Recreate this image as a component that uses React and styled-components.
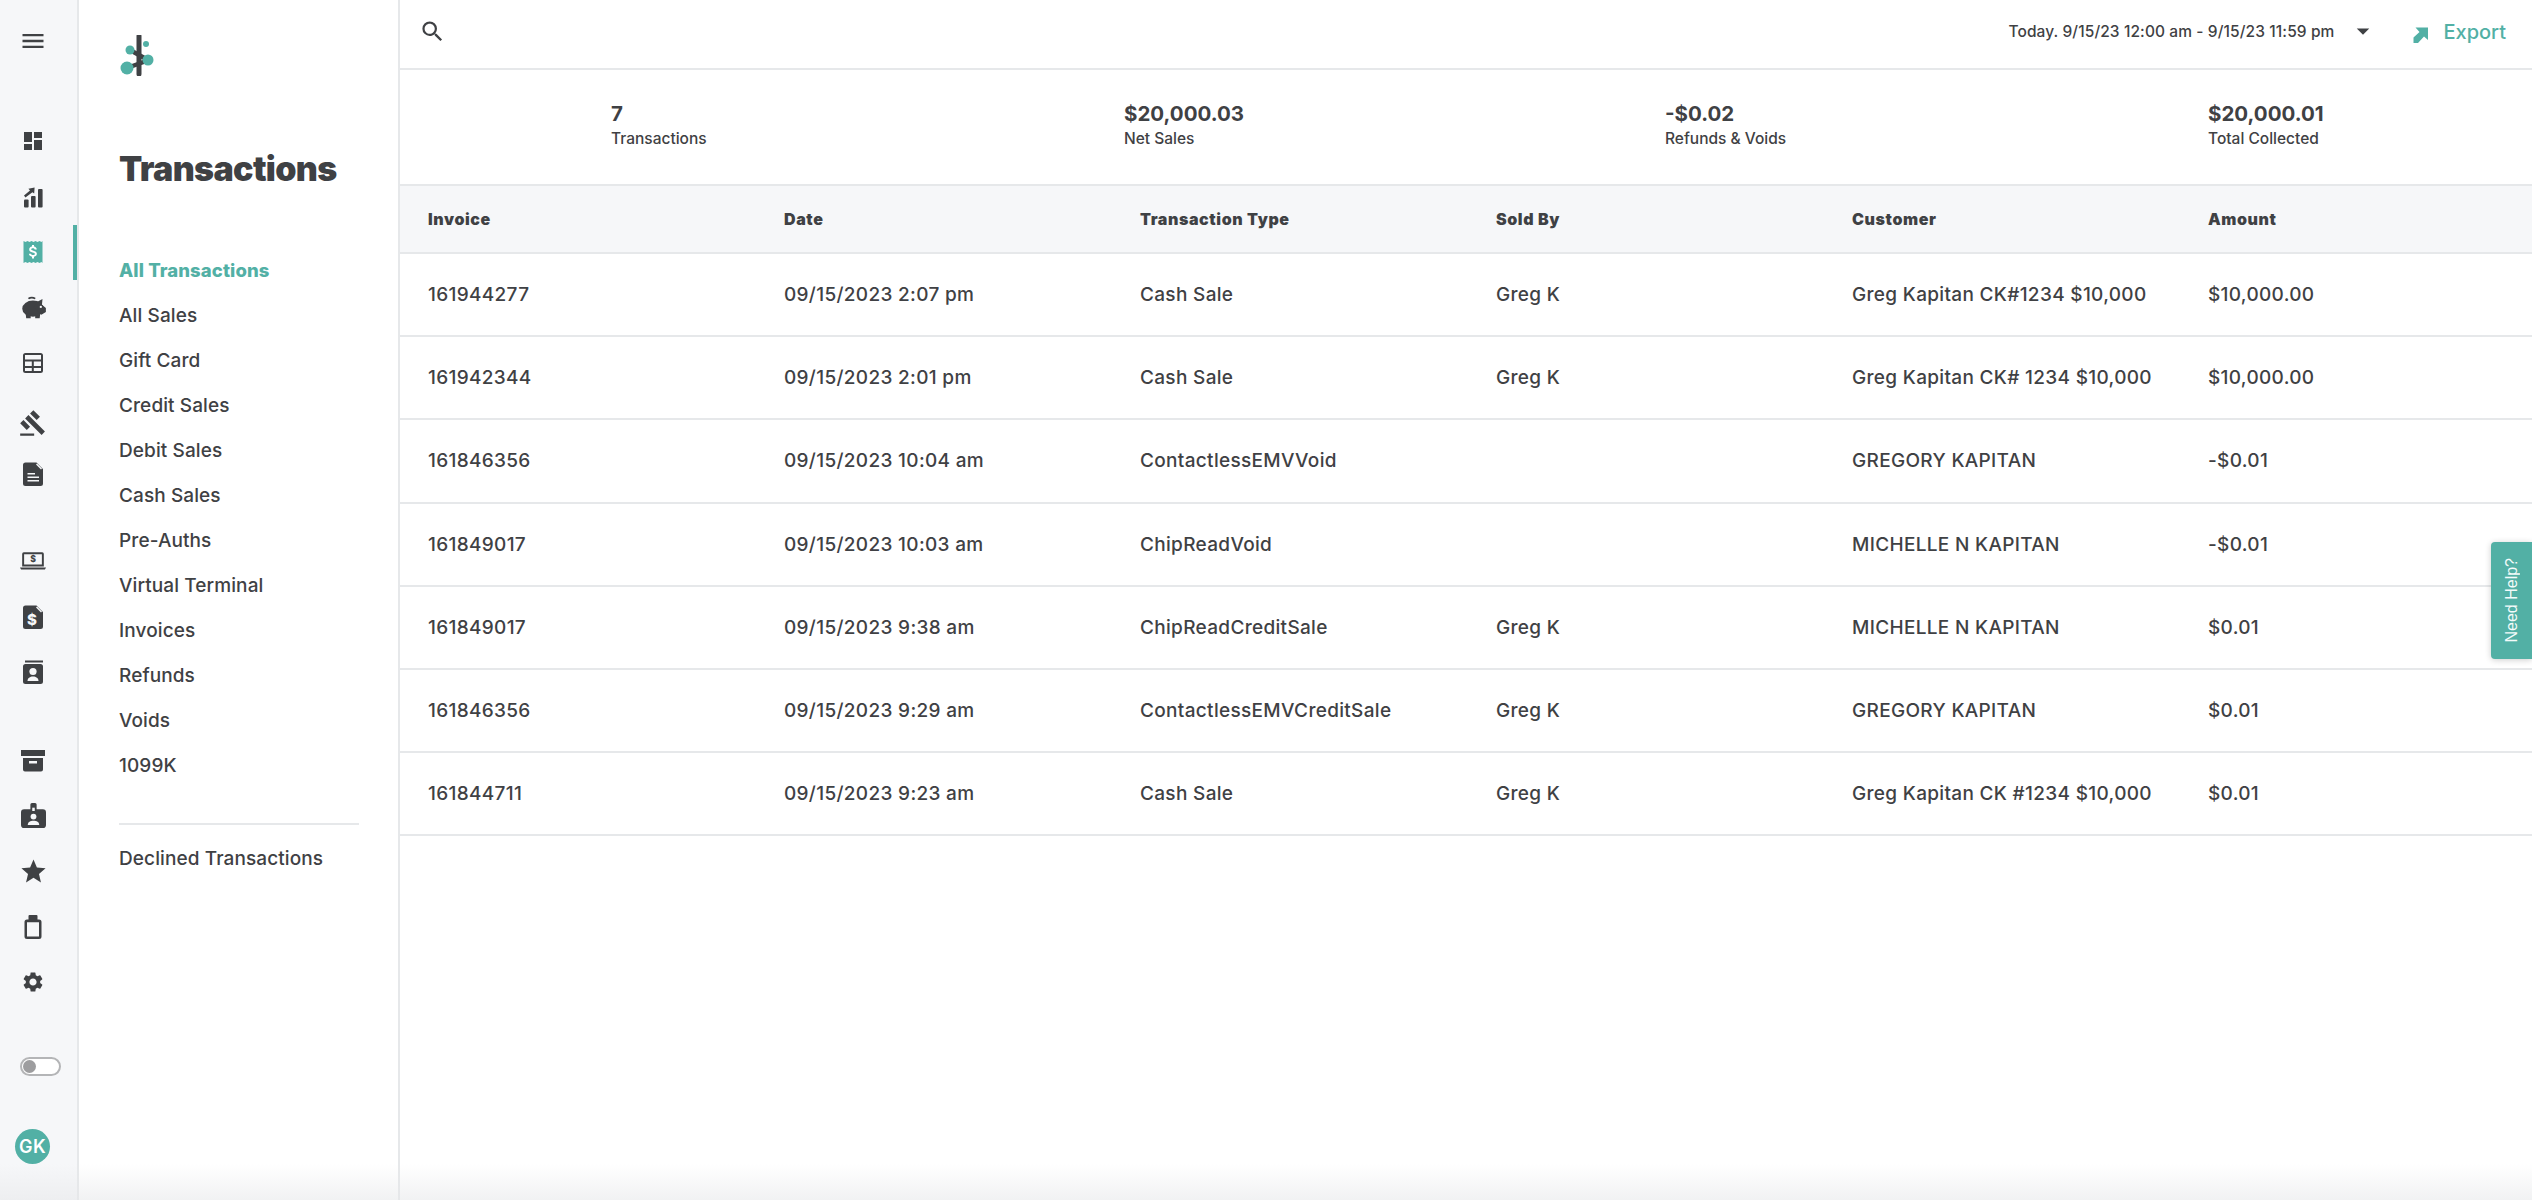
import React from "react";
import styled, { createGlobalStyle } from "styled-components";
import { MdMenu, MdDashboard, MdGavel, MdStar, MdSettings, MdSearch, MdArrowDropDown } from "react-icons/md";

const TEAL = "#52b0a5";
const INK = "#3f4144";
const LINE = "#e6e8ea";

const Global = createGlobalStyle`
  html, body { margin: 0; padding: 0; background: #fff; }
  body { font-family: Inter, "Liberation Sans", sans-serif; color: ${INK}; }
  * { box-sizing: border-box; }
`;

const Page = styled.div`
  position: relative;
  display: flex;
  width: 2532px;
  height: 1200px;
  overflow: hidden;
`;
const BottomFade = styled.div`
  position: absolute;
  left: 0; right: 0; bottom: 0;
  height: 36px;
  background: linear-gradient(to bottom, rgba(230,231,233,0), rgba(230,231,233,.55));
  pointer-events: none;
`;

const Rail = styled.nav`
  width: 79px;
  flex: none;
  padding-top: 13px;
  background: #f6f7f9;
  border-right: 2px solid ${LINE};
  display: flex;
  flex-direction: column;
`;
const RailGroup = styled.div`
  display: flex;
  flex-direction: column;
  margin-top: ${p => p.$gap}px;
`;
const RailSlot = styled.div`
  height: 55.5px;
  display: flex;
  align-items: center;
  justify-content: center;
  padding-right: 7px;
  padding-top: ${p => p.$drop || 0}px;
  border-right: 4px solid ${p => (p.$active ? TEAL : "transparent")};
  color: ${p => (p.$active ? TEAL : INK)};
  font-size: ${p => p.$size || 24}px;
`;
const Toggle = styled.div`
  margin: 47px 0 0 20px;
  width: 41px;
  height: 19px;
  border: 2px solid #b4b5b7;
  border-radius: 10px;
  background: #fff;
  padding: 1px;
  &::before {
    content: "";
    display: block;
    width: 13px;
    height: 13px;
    border-radius: 50%;
    background: #9d9d9f;
  }
`;
const Avatar = styled.div`
  margin: 53px 0 0 15px;
  width: 35px;
  height: 35px;
  border-radius: 50%;
  background: ${TEAL};
  color: #fff;
  font-size: 18px;
  font-weight: 600;
  letter-spacing: .5px;
  display: flex;
  align-items: center;
  justify-content: center;
`;

const Side = styled.aside`
  width: 321px;
  flex: none;
  padding: 35px 40px 0 40px;
  border-right: 2px solid ${LINE};
  display: flex;
  flex-direction: column;
`;
const Logo = styled.svg`
  width: 38px;
  height: 41px;
  display: block;
`;
const Title = styled.h1`
  margin: 71px 0 0;
  font-size: 34px;
  line-height: 44px;
  font-weight: 900;
  letter-spacing: -0.65px;
  color: ${INK};
`;
const SideNav = styled.ul`
  list-style: none;
  margin: ${p => p.$top}px 0 0;
  padding: 0;
`;
const SideItem = styled.li`
  height: 45px;
  line-height: 45px;
  font-size: ${p => (p.$active ? 18.5 : 19)}px;
  font-weight: ${p => (p.$active ? 800 : 500)};
  letter-spacing: .1px;
  color: ${p => (p.$active ? TEAL : INK)};
  white-space: nowrap;
`;
const Divider = styled.hr`
  margin: 35px 0 11px;
  border: 0;
  border-top: 2px solid ${LINE};
  width: 240px;
`;

const Main = styled.main`
  flex: 1;
  min-width: 0;
  display: flex;
  flex-direction: column;
`;
const TopBar = styled.header`
  height: 70px;
  flex: none;
  display: flex;
  align-items: center;
  padding: 0 26px 6px 19px;
  border-bottom: 2px solid ${LINE};
  font-size: 24px;
`;
const SearchButton = styled.div`
  display: flex;
  margin-right: auto;
  color: ${INK};
  font-size: 27px;
`;
const DateRange = styled.div`
  font-size: 15.5px;
  font-weight: 500;
  letter-spacing: .1px;
  color: ${INK};
  white-space: nowrap;
`;
const Caret = styled.div`
  display: flex;
  margin-left: 14px;
  color: ${INK};
  font-size: 30px;
`;
const ExportButton = styled.div`
  margin-left: 34px;
  display: flex;
  align-items: center;
  gap: 15px;
  color: ${TEAL};
  font-size: 20px;
  font-weight: 500;
  padding-top: 2px;
`;
const Stats = styled.section`
  height: 116px;
  flex: none;
  display: grid;
  grid-template-columns: 513px 541px 543px 1fr;
  align-content: center;
  padding-left: 211px;
  padding-bottom: 2px;
  border-bottom: 2px solid ${LINE};
`;
const Stat = styled.div``;
const StatValue = styled.div`
  font-size: 20.5px;
  line-height: 26px;
  font-weight: 700;
`;
const StatLabel = styled.div`
  font-size: 15.5px;
  line-height: 24px;
  font-weight: 500;
`;
const TableRow = styled.div`
  display: grid;
  grid-template-columns: repeat(6, 356px);
  align-items: center;
  padding-left: 28px;
  height: 83.2px;
  border-bottom: 2px solid ${LINE};
  font-size: 19px;
  letter-spacing: .32px;
  font-weight: 500;
  white-space: nowrap;
`;
const TableHead = styled(TableRow)`
  height: 68px;
  background: #f6f7f9;
  font-size: 16px;
  letter-spacing: .6px;
  font-weight: 900;
`;
const HelpTab = styled.div`
  position: absolute;
  right: 0;
  top: 542px;
  width: 41px;
  height: 117px;
  background: ${TEAL};
  border-radius: 4px 0 0 4px;
  box-shadow: 0 1px 6px rgba(0,0,0,.2);
  color: #f3fbfa;
  font-family: "Liberation Sans", sans-serif;
  font-size: 16px;
  display: flex;
  align-items: center;
  justify-content: center;
`;
const HelpLabel = styled.span`
  writing-mode: vertical-rl;
  transform: rotate(180deg);
`;

const Fill = styled.svg`
  width: 24px;
  height: 24px;
  display: block;
  fill: currentColor;
  flex: none;
`;
const ExportIcon = styled(Fill)`
  width: 16px;
  height: 16px;
  margin-top: 6px;
`;

const Chart = () => (
  <Fill viewBox="0 0 24 24">
    <rect x="3" y="14.5" width="4.6" height="8" rx="1" />
    <rect x="10" y="11" width="4.6" height="11.5" rx="1" />
    <rect x="17" y="4" width="4.6" height="18.5" rx="1" />
    <path d="M3 10.5 9 5.6 7.4 3.8 13.6 2.6 13.2 8.6 11.4 7.2 4.4 12.6z" />
  </Fill>
);
const Receipt = () => (
  <Fill viewBox="0 0 24 24">
    <path d="M2.5 1 4.5 2 6.5 1 8.5 2 10.5 1 12.5 2 14.5 1 16.5 2 18.5 1 20.5 2 21.5 1V23L20.5 22 18.5 23 16.5 22 14.5 23 12.5 22 10.5 23 8.5 22 6.5 23 4.5 22 2.5 23z" />
    <path fill="#fff" d="M11 5h2v1.6c1.500.3 2.600 1.200 2.800 2.800h-2.100c-.2-.8-.8-1.200-1.800-1.200-1 0-1.700.4-1.700 1.100 0 .7.600 1 2.100 1.400 2.100.5 3.600 1.200 3.600 3.100 0 1.600-1.200 2.600-2.900 2.900V18.500h-2v-1.800c-1.700-.3-3-1.300-3.100-3h2.100c.1.900.9 1.400 2 1.400 1.200 0 1.900-.5 1.900-1.200 0-.8-.7-1.100-2.300-1.500-2-.5-3.400-1.200-3.400-3 0-1.500 1.200-2.500 2.800-2.800z" />
  </Fill>
);
const Piggy = () => (
  <Fill viewBox="0 0 24 24" style={{ width: 27, height: 27 }}>
    <ellipse cx="11.500" cy="13" rx="9.500" ry="7.200" />
    <path d="M15 7 20 4.500 19.500 9.500 23 12.500V16L19 18.500 12 12zM5 17h4.500v4.500H5.500zM13.500 17H18l-.5 4.500h-4zM7 3.500c2-1.500 5-1.500 7 0l-1 1.200c-1.500-1-3.500-1-5 0z" />
    <circle cx="18.500" cy="11.500" r="1" fill="#f6f7f9" />
  </Fill>
);
const TableIcon = () => (
  <Fill viewBox="0 0 24 24">
    <path fillRule="evenodd" d="M4.500 2h15A2.500 2.500 0 0 1 22 4.500v15a2.500 2.500 0 0 1-2.500 2.500h-15A2.500 2.500 0 0 1 2 19.500v-15A2.500 2.500 0 0 1 4.500 2zM4 4v4.500h16V4zM4 10.500V15h6.800v-4.500zM12.800 10.500V15H20v-4.500zM4 17v3h6.800v-3zM12.800 17v3H20v-3z" />
  </Fill>
);
const Doc = () => (
  <Fill viewBox="0 0 24 24">
    <path d="M4.500 0.500H15.500L22 7V21.500A2.500 2.500 0 0 1 19.500 24H4.500A2.500 2.500 0 0 1 2 21.500V3A2.500 2.500 0 0 1 4.500 .500z" />
    <path fill="#f6f7f9" d="M6.500 11H14V12.500H6.500zM6.500 14.500H18V16H6.500zM6.500 18H18V19.500H6.500zM16 1.500 21 6.500 20 7.500 15 2.500z" />
  </Fill>
);
const Laptop = () => (
  <Fill viewBox="0 0 24 24" style={{ width: 26, height: 26 }}>
    <path fillRule="evenodd" d="M3.500 4h17A1.500 1.500 0 0 1 22 5.500V17H2V5.500A1.500 1.500 0 0 1 3.500 4zM3.800 5.800V15.300H20.200V5.800z" />
    <path d="M0 18h24l-1 1.800H1z" />
    <text x="12" y="13.300" fontSize="8" fontWeight="800" textAnchor="middle" fontFamily="Inter, sans-serif">$</text>
  </Fill>
);
const Invoice = () => (
  <Fill viewBox="0 0 24 24">
    <path d="M4.500 0.500H15.500L22 7V21.500A2.500 2.500 0 0 1 19.500 24H4.500A2.500 2.500 0 0 1 2 21.500V3A2.500 2.500 0 0 1 4.500 .500z" />
    <path fill="#f6f7f9" d="M16 1.500 21 6.500 20 7.500 15 2.500z" />
    <text x="11" y="20" fontSize="15" fontWeight="800" textAnchor="middle" fill="#f6f7f9" fontFamily="Inter, sans-serif">$</text>
  </Fill>
);
const Contact = () => (
  <Fill viewBox="0 0 24 24">
    <path d="M4 .5H22V2.500H4zM4.500 4h15A2.500 2.500 0 0 1 22 6.500v15a2.500 2.500 0 0 1-2.500 2.500h-15A2.500 2.500 0 0 1 2 21.500v-15A2.500 2.500 0 0 1 4.500 4z" />
    <circle cx="12" cy="11.500" r="3.600" fill="#f6f7f9" />
    <path fill="#f6f7f9" d="M6.500 21c0-3 2.500-4.600 5.500-4.600s5.500 1.600 5.500 4.600z" />
  </Fill>
);
const Archive = () => (
  <Fill viewBox="0 0 24 24">
    <path d="M0 2h24v6H0zM2 10h20v11.500a2 2 0 0 1-2 2H4a2 2 0 0 1-2-2z" />
    <path fill="#f6f7f9" d="M8 13h8v2.500H8z" />
  </Fill>
);
const Badge = () => (
  <Fill viewBox="0 0 24 24" style={{ width: 25, height: 25 }}>
    <path d="M3 6h6V1.500A1.500 1.500 0 0 1 10.500 0h3A1.500 1.500 0 0 1 15 1.500V6h6a3 3 0 0 1 3 3v12a3 3 0 0 1-3 3H3a3 3 0 0 1-3-3V9a3 3 0 0 1 3-3z" />
    <path fill="#f6f7f9" d="M10.800 4.500h2.400v3.200h-2.400z" />
    <circle cx="12" cy="13" r="2.800" fill="#f6f7f9" />
    <path fill="#f6f7f9" d="M6.500 21c0-2.700 2.500-4 5.500-4s5.500 1.300 5.500 4z" />
  </Fill>
);
const Bottle = () => (
  <Fill viewBox="0 0 24 24">
    <path fillRule="evenodd" d="M8.500 0h7a1 1 0 0 1 1 1v3.500H18A2.500 2.500 0 0 1 20.500 7v14.500A2.500 2.500 0 0 1 18 24H6a2.500 2.500 0 0 1-2.500-2.500V7A2.500 2.500 0 0 1 6 4.500h1.500V1a1 1 0 0 1 1-1zM6 7.200V21.500H18V7.200z" />
  </Fill>
);
const ExportArrow = () => (
  <ExportIcon viewBox="0 0 16 16">
    <path d="M3.500 0.500H16V13L12 9.500 6 16H1.500V10.500L7.500 5z" />
  </ExportIcon>
);

const RAIL_GROUPS = [
  { gap: 45, items: [
    { icon: <MdDashboard /> }, { icon: <Chart /> }, { icon: <Receipt />, active: true },
    { icon: <Piggy /> }, { icon: <TableIcon /> }, { icon: <MdGavel />, size: 28, drop: 8 }, { icon: <Doc /> },
  ]},
  { gap: 31.5, items: [{ icon: <Laptop /> }, { icon: <Invoice /> }, { icon: <Contact /> }] },
  { gap: 32.5, items: [
    { icon: <Archive /> }, { icon: <Badge /> }, { icon: <MdStar />, size: 29 },
    { icon: <Bottle /> }, { icon: <MdSettings />, size: 24 },
  ]},
];

const NAV = ["All Sales", "Gift Card", "Credit Sales", "Debit Sales", "Cash Sales", "Pre-Auths",
  "Virtual Terminal", "Invoices", "Refunds", "Voids", "1099K"];

const STATS = [
  ["7", "Transactions"],
  ["$20,000.03", "Net Sales"],
  ["-$0.02", "Refunds & Voids"],
  ["$20,000.01", "Total Collected"],
];

const HEAD = ["Invoice", "Date", "Transaction Type", "Sold By", "Customer", "Amount"];
const ROWS = [
  ["161944277", "09/15/2023 2:07 pm", "Cash Sale", "Greg K", "Greg Kapitan CK#1234 $10,000", "$10,000.00"],
  ["161942344", "09/15/2023 2:01 pm", "Cash Sale", "Greg K", "Greg Kapitan CK# 1234 $10,000", "$10,000.00"],
  ["161846356", "09/15/2023 10:04 am", "ContactlessEMVVoid", "", "GREGORY KAPITAN", "-$0.01"],
  ["161849017", "09/15/2023 10:03 am", "ChipReadVoid", "", "MICHELLE N KAPITAN", "-$0.01"],
  ["161849017", "09/15/2023 9:38 am", "ChipReadCreditSale", "Greg K", "MICHELLE N KAPITAN", "$0.01"],
  ["161846356", "09/15/2023 9:29 am", "ContactlessEMVCreditSale", "Greg K", "GREGORY KAPITAN", "$0.01"],
  ["161844711", "09/15/2023 9:23 am", "Cash Sale", "Greg K", "Greg Kapitan CK #1234 $10,000", "$0.01"],
];

export default function App() {
  return (
    <Page>
      <Global />
      <Rail>
        <RailSlot $size={28}><MdMenu /></RailSlot>
        {RAIL_GROUPS.map((g, i) => (
          <RailGroup key={i} $gap={g.gap}>
            {g.items.map((it, j) => (
              <RailSlot key={j} $active={it.active} $size={it.size} $drop={it.drop}>{it.icon}</RailSlot>
            ))}
          </RailGroup>
        ))}
        <Toggle />
        <Avatar>GK</Avatar>
      </Rail>
      <Side>
        <Logo viewBox="0 0 38 41">
          <path d="M8 33 30 25M11 15 29 25" stroke={INK} strokeWidth="4.500" />
          <path d="M20 1V39" stroke={INK} strokeWidth="5" strokeLinecap="round" />
          <circle cx="8" cy="33" r="6.500" fill={TEAL} />
          <circle cx="29" cy="25" r="5.500" fill={TEAL} />
          <circle cx="11" cy="15" r="4.500" fill={TEAL} />
          <circle cx="27" cy="9" r="3" fill={TEAL} />
        </Logo>
        <Title>Transactions</Title>
        <SideNav $top={57}>
          <SideItem $active>All Transactions</SideItem>
          {NAV.map(n => <SideItem key={n}>{n}</SideItem>)}
        </SideNav>
        <Divider />
        <SideNav $top={0}>
          <SideItem>Declined Transactions</SideItem>
        </SideNav>
      </Side>
      <Main>
        <TopBar>
          <SearchButton><MdSearch /></SearchButton>
          <DateRange>Today. 9/15/23 12:00 am - 9/15/23 11:59 pm</DateRange>
          <Caret><MdArrowDropDown /></Caret>
          <ExportButton><ExportArrow />Export</ExportButton>
        </TopBar>
        <Stats>
          {STATS.map(([v, l]) => (
            <Stat key={l}><StatValue>{v}</StatValue><StatLabel>{l}</StatLabel></Stat>
          ))}
        </Stats>
        <TableHead>{HEAD.map(h => <div key={h}>{h}</div>)}</TableHead>
        {ROWS.map((r, i) => (
          <TableRow key={i}>{r.map((c, j) => <div key={j}>{c}</div>)}</TableRow>
        ))}
      </Main>
      <HelpTab><HelpLabel>Need Help?</HelpLabel></HelpTab>
      <BottomFade />
    </Page>
  );
}
